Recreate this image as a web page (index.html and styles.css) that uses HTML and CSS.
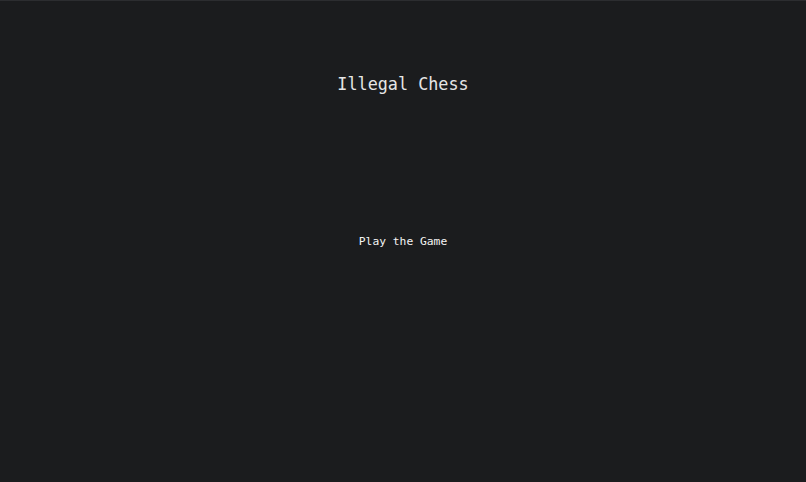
FILE: index.html
```html
<!DOCTYPE html>
<html lang="en">
<head>
<meta charset="utf-8">
<title>Illegal Chess</title>
<link rel="stylesheet" href="styles.css">
</head>
<body>
<main class="home">
  <h1 class="title">Illegal Chess</h1>
  <button class="play-btn" type="button">Play the Game</button>
</main>
</body>
</html>
```
FILE: styles.css
```css
html, body {
  margin: 0;
  height: 100%;
  background: #1b1c1e;
}
body {
  border-top: 1px solid #2c2d30;
  box-sizing: border-box;
  font-family: "DejaVu Sans Mono", "Liberation Mono", monospace;
  color: #e6e6e6;
}
.home {
  display: flex;
  flex-direction: column;
  align-items: center;
  padding-top: 72px;
}
.title {
  margin: 0;
  font-size: 16.8px;
  font-weight: normal;
  line-height: 22px;
}
.play-btn {
  margin-top: 139px;
  background: none;
  border: none;
  padding: 0;
  font-family: inherit;
  font-size: 11.3px;
  line-height: 16px;
  color: #f4f4f4;
  cursor: pointer;
}
```
